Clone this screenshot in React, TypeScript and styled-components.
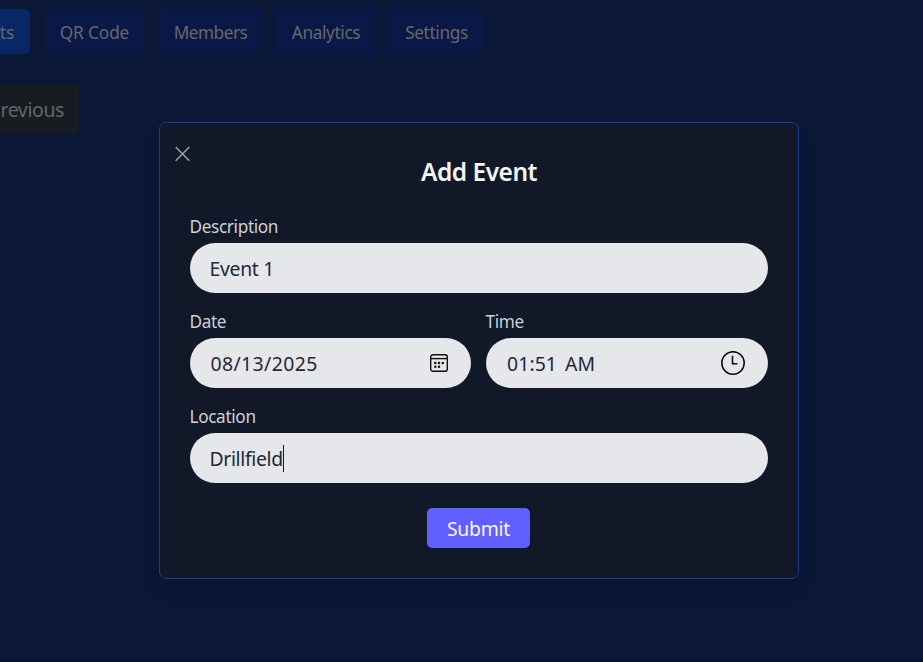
import React from "react";
import styled, { createGlobalStyle } from "styled-components";

const GlobalStyle = createGlobalStyle`
  *, *::before, *::after { box-sizing: border-box; }
  body {
    margin: 0;
    background: #0a1736;
    font-family: "Noto Sans", "Open Sans", sans-serif;
    overflow: hidden;
  }
  button, input { font: inherit; }
`;

const Page = styled.div`
  width: 923px;
  height: 662px;
  overflow: hidden;
  display: grid;
  grid-template-areas: "stack";
  border-bottom: 1px solid #070b24;
`;

const Dashboard = styled.div`
  grid-area: stack;
  display: flex;
  flex-direction: column;
  align-items: flex-start;
  gap: 30px;
  padding-top: 9px;
`;

const Tabs = styled.nav`
  display: flex;
  gap: 15px;
  margin-left: -55px;
`;

const Tab = styled.button<{ $width: number; $spacing: number; $active?: boolean }>`
  width: ${(p) => p.$width}px;
  height: 45px;
  padding: 1px 0 0;
  border: 0;
  border-radius: 5px;
  background: ${(p) => (p.$active ? "#082767" : "#0a1848")};
  color: #666869;
  font-size: 17.2px;
  letter-spacing: ${(p) => p.$spacing}px;
  white-space: nowrap;
`;

const PagerButton = styled.button`
  width: 109px;
  height: 50px;
  margin-left: -30px;
  padding: 0 15px 0 0;
  border: 0;
  border-radius: 5px;
  background: #171c22;
  color: #656664;
  font-size: 19.5px;
  letter-spacing: -0.4px;
  text-align: right;
`;

const Dialog = styled.section`
  grid-area: stack;
  position: relative;
  width: 640px;
  height: 457px;
  margin: 122px 0 0 159px;
  padding: 33px 30px 30px;
  border: 1px solid #1c398e;
  border-radius: 7px;
  background: #111827;
  box-shadow: 0 12px 19px -4px rgba(0, 0, 0, 0.12), 0 5px 8px -5px rgba(0, 0, 0, 0.12);
  display: flex;
  flex-direction: column;
`;

const CloseButton = styled.button`
  position: absolute;
  top: 23px;
  left: 15px;
  width: 15px;
  height: 16px;
  padding: 0;
  border: 0;
  background: none;
  color: #99a1af;
  svg { display: block; }
`;

const Title = styled.h2`
  margin: 0 0 25px;
  height: 32px;
  line-height: 32px;
  font-size: 24.5px;
  font-weight: 600;
  letter-spacing: -0.5px;
  text-align: center;
  color: #f3f4f6;
`;

const Form = styled.form`
  display: flex;
  flex-direction: column;
  gap: 15px;
`;

const Row = styled.div`
  display: grid;
  grid-template-columns: 281px 282px;
  gap: 15px;
`;

const Field = styled.label`
  display: flex;
  flex-direction: column;
`;

const Label = styled.span<{ $spacing: number }>`
  height: 30px;
  padding-top: 1px;
  line-height: 25px;
  font-size: 17.2px;
  letter-spacing: ${(p) => p.$spacing}px;
  text-indent: -0.5px;
  color: #cdd1d8;
`;

const InputBox = styled.span<{ $spacing: number; $start?: number; $end?: number }>`
  display: flex;
  align-items: center;
  justify-content: space-between;
  height: 50px;
  padding: 0 ${(p) => p.$end ?? 20}px 0 ${(p) => p.$start ?? 19.5}px;
  border-radius: 25px;
  background: #e5e7eb;
  color: #1e2939;
  font-size: 19.4px;
  letter-spacing: ${(p) => p.$spacing}px;
  white-space: pre;
  svg { display: block; }
`;

const Value = styled.span<{ $gap?: number }>`
  display: flex;
  align-items: center;
  gap: ${(p) => p.$gap ?? 0}px;
`;

const Caret = styled.span`
  width: 1px;
  height: 27px;
  background: #111827;
`;

const Submit = styled.button`
  align-self: center;
  width: 103px;
  height: 40px;
  margin: 10px 0 0 -1px;
  padding: 1px 0 0;
  border: 0;
  border-radius: 5px;
  background: #615fff;
  color: #f6f6ff;
  font-size: 19.4px;
  letter-spacing: -0.25px;
`;

const CloseIcon = () => (
  <svg width="15" height="16" viewBox="0 0 15 16" fill="none" stroke="currentColor" strokeWidth="1.5">
    <path d="M0.7 1L14.3 14.8M14.3 1L0.7 14.8" />
  </svg>
);

const CalendarIcon = () => (
  <svg width="18" height="18" viewBox="0 0 18 18" fill="none" stroke="#111" strokeWidth="1.4">
    <rect x="0.7" y="0.7" width="16.6" height="16.6" rx="2.4" />
    <path d="M1 4.6H17" />
    <g fill="#111" stroke="none">
      <circle cx="5.3" cy="9" r="1.25" />
      <circle cx="9" cy="9" r="1.25" />
      <circle cx="12.8" cy="9" r="1.25" />
      <circle cx="5.3" cy="12.7" r="1.25" />
      <circle cx="9" cy="12.7" r="1.25" />
    </g>
  </svg>
);

const ClockIcon = () => (
  <svg width="24" height="24" viewBox="0 0 24 24" fill="none" stroke="#080808" strokeWidth="1.5">
    <circle cx="12" cy="12" r="11.2" />
    <path d="M11.5 4.8V12.7H16.4" />
  </svg>
);

const tabs = [
  { name: "Events", width: 85, spacing: 0.15, active: true },
  { name: "QR Code", width: 99, spacing: -0.1 },
  { name: "Members", width: 103, spacing: -0.5 },
  { name: "Analytics", width: 98, spacing: -0.35 },
  { name: "Settings", width: 93, spacing: -0.35 },
];

export default function App() {
  return (
    <>
      <GlobalStyle />
      <Page>
        <Dashboard>
          <Tabs>
            {tabs.map((t) => (
              <Tab key={t.name} $width={t.width} $spacing={t.spacing} $active={t.active}>
                {t.name}
              </Tab>
            ))}
          </Tabs>
          <PagerButton>Previous</PagerButton>
        </Dashboard>
        <Dialog role="dialog" aria-label="Add Event">
          <CloseButton aria-label="Close">
            <CloseIcon />
          </CloseButton>
          <Title>Add Event</Title>
          <Form onSubmit={(e) => e.preventDefault()}>
            <Field>
              <Label $spacing={-0.35}>Description</Label>
              <InputBox $spacing={-0.3}>Event 1</InputBox>
            </Field>
            <Row>
              <Field>
                <Label $spacing={-0.35}>Date</Label>
                <InputBox $spacing={0.4} $start={20.5} $end={23}>
                  <Value>08/13/2025</Value>
                  <CalendarIcon />
                </InputBox>
              </Field>
              <Field>
                <Label $spacing={-0.35}>Time</Label>
                <InputBox $spacing={0.1} $start={21} $end={23}>
                  <Value $gap={8}>
                    <span>01:51</span>
                    <span>AM</span>
                  </Value>
                  <ClockIcon />
                </InputBox>
              </Field>
            </Row>
            <Field>
              <Label $spacing={-0.35}>Location</Label>
              <InputBox $spacing={-0.35}>
                <Value>
                  Drillfield
                  <Caret />
                </Value>
              </InputBox>
            </Field>
            <Submit type="submit">Submit</Submit>
          </Form>
        </Dialog>
      </Page>
    </>
  );
}
